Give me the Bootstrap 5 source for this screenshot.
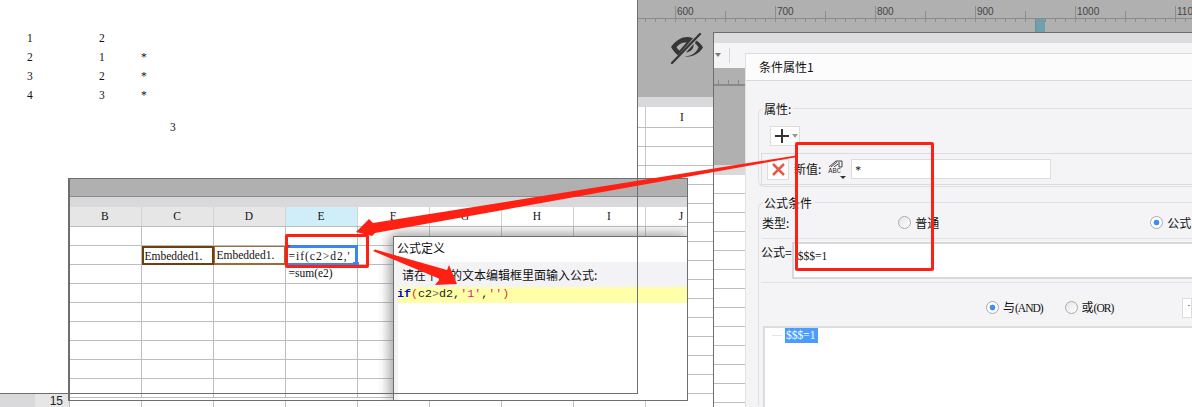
<!DOCTYPE html>
<html lang="zh">
<head>
<meta charset="utf-8">
<title>条件属性</title>
<link href="https://cdn.jsdelivr.net/npm/bootstrap@5.3.0/dist/css/bootstrap.min.css" rel="stylesheet">
<style>
html,body{margin:0;background:#fff;overflow:hidden}
body{font-family:"Liberation Sans","Noto Sans CJK SC",sans-serif;color:#111}
.stage{position:relative;width:1192px;height:407px;overflow:hidden;background:#fff}
.win{position:absolute;overflow:hidden}
.pix{font-family:"Liberation Serif","Noto Sans CJK SC",serif;font-size:11.5px;line-height:1;color:#111;white-space:nowrap}
.cjk{font-family:"Noto Sans CJK SC","Noto Sans CJK JP",sans-serif;font-size:12px;line-height:1;color:#111;white-space:nowrap}
.tight{letter-spacing:-1px}
/* top-left data */
.datablock{left:0;top:0;width:637px;height:393px}
.datarow{display:flex;height:19px;align-items:center;padding-left:27px}
.datablock .rows{padding-top:29px}
.datarow span:nth-child(1){width:72px}
.datarow span:nth-child(2){width:42px}
.datasum{padding:17px 0 0 170px}
/* behind sheet right */
.backsheet{left:638px;top:0;width:75px;height:407px;background:#fff}
.rulerback{height:18px}
.graybar{background:#b0b0b0}
.lightbar{background:#d9d9db;height:10px}
.ruler-wrap{left:637px;top:0;width:555px;height:33px;background:#b0b0b0}
.ruler-line{border-bottom:1px solid #8a8a8a;height:19px}
.teal{left:1035px;top:19px;width:10px;height:14px;background:#6fa0ae;border-left:1px solid #6f8f98}
.eyezone{height:79px;display:flex;justify-content:flex-start;padding:14px 0 0 32px}
.gridrows{height:280px;background-image:linear-gradient(#bdbdbd 1px,transparent 1px),linear-gradient(90deg,#c8c8c8 1px,transparent 1px);background-size:100% 19px,100% 100%;background-position:0 0,7px 0;background-repeat:repeat,no-repeat}
.colhead{height:20px;text-align:center;padding-left:13px;padding-top:5px;background:linear-gradient(90deg,transparent 7px,#c8c8c8 7px,#c8c8c8 8px,transparent 8px)}
/* under-window bits */
.underbar{left:0;top:394px;width:69px;height:13px;display:flex}
.underbar i{display:block;width:35px;background:#d9d9db}
.underbar b{display:block;flex:1;background:#e6e6e6;font-weight:400;font-size:12px;line-height:14px;text-align:right;padding-right:6px;color:#222;font-family:"Liberation Sans",sans-serif}
.underlines{left:69px;top:400px;width:576px;height:7px;background-image:linear-gradient(90deg,#bdbdbd 1px,transparent 1px);background-size:72px 100%;background-position:0 0}
/* spreadsheet */
.sheetwin{left:68px;top:178px;width:620px;height:223px;background:#fff;border:2px solid #6e6e6e;border-width:1px 1px 1px 2px}
.sheetwin .titleb{height:18px;background:#b0b0b0;border-bottom:1px solid #8a8a8a}
.sheetwin .bandb{height:10px;background:#d9d9db}
.xtable{border-collapse:collapse;table-layout:fixed;width:624px;margin:0 0 0 -1px}
.xtable th,.xtable td{width:72px;padding:0;border-right:1px solid #bdbdbd;border-bottom:1px solid #bdbdbd;height:19px;font-weight:400;vertical-align:middle}
.xtable th{background:#e6e6e6;text-align:center;height:19px;border-right-color:#d4d4d4}
.xtable th.sel{background:#cfeefa}
.xtable th.open{background:#fff}
.xtable td{position:relative;padding-left:3px}
.embed{display:block;position:absolute;left:0;top:0;right:-1px;bottom:-1px;border:2px solid #6d3f13;padding:3px 0 0 1px;overflow:hidden}
.embed.lite{border:1px solid #9a6a3a;border-width:1px 2px 2px 1px;padding-left:2px}
.activecell{position:absolute;left:1px;top:-1px;right:-1px;bottom:-1px;border:solid #3a86f0;border-width:3px 3px 2px 0;padding:3px 0 0 2px;overflow:hidden;letter-spacing:1px}
.hnd{position:absolute;left:353px;top:262px;width:6px;height:4px;background:#3a86f0}
.corner{position:absolute;left:286px;top:245px;width:0;height:0;border-top:5px solid #e0201a;border-right:5px solid transparent}
/* formula definition */
.fdlg{left:393px;top:236px;width:295px;height:165px;background:#fff;border:1px solid #6e6e6e;box-shadow:-6px 0 9px rgba(120,120,120,.45),0 -6px 8px rgba(130,130,130,.35);clip-path:inset(-12px 0 0 -14px);overflow:visible}
.fdlg-title{height:25px;padding:5px 0 0 3px;font-size:12px}
.fdlg-hint{height:25px;padding:7px 0 0 8px;background:#f3f3f6;font-size:12px}
.fdlg-code{margin-left:3px;height:16px;background:#ffffa8;font-family:"Liberation Mono",monospace;font-size:11.7px;line-height:15px;color:#222;white-space:pre}
.fdlg-rest{position:absolute;left:0;top:50px;bottom:0;width:4px;background:#f3f3f6}
.k{color:#0000ff;font-weight:700}.p{color:#e8302a}.s{color:#e6198c}.g{color:#777}
/* window 3 */
.propwin{left:713px;top:32px;width:480px;height:376px;background:#fff;border-left:1px solid #6e6e6e;border-top:1px solid #6e6e6e}
.band-a{height:10px;background:#dcdcde}
.band-b{height:25px;background:#f5f5f7;display:flex;align-items:center;gap:7px;padding-left:1px;border-bottom:1px solid #f5f5f7}
.band-b i{display:block;width:0;height:0;border:3px solid transparent;border-top:4px solid #777;border-bottom:0}
.band-b u{display:block;width:1px;height:15px;background:#d8d8d8;margin-left:1px}
.band-c{height:97px;background:#b0b0b0}
.tick-strip{height:18px;border-bottom:2px solid #8a8a8a;background-image:linear-gradient(90deg,#8a8a8a 1px,transparent 1px);background-size:10px 4px;background-position:4px 12px;background-repeat:repeat-x}
.band-d{height:10px;background:#d9d9db}
.band-e{height:230px;background-image:linear-gradient(#bdbdbd 1px,transparent 1px);background-size:100% 19px;background-position:0 18px}
/* condition dialog */
.cdlg{left:745px;top:53px;width:447px;height:354px;background:#f4f4f6;border-left:1px solid #e2e2e4;border-top:1px solid #dcdcdc}
.cdlg-title{height:27px;background:#fcfcfc;border-bottom:1px solid #d8d8da;padding:7px 0 0 13px;font-size:12px}
.fs{position:relative;margin-left:12px;border:1px solid #e0e0e2;border-right:0;border-radius:6px 0 0 6px}
.fs-label{position:absolute;left:4px;top:-7px;background:#f4f4f6;padding:0 2px 0 1px;font-size:12px;line-height:13px}
.fs1{margin-top:27px;height:79px}
.plusbtn{margin:17px 0 0 11px;width:30px;height:20px;background:#fff;border:1px solid #dcdcdc;display:flex;align-items:center;padding-left:3px;gap:2px}
.plusbtn i{display:block;border:3px solid transparent;border-top:4px solid #999;border-bottom:0}
.valrow{margin:7px 0 0 2px;height:32px;border:1px solid #dcdcdc;border-right:0;display:flex;align-items:center;padding-left:5px}
.xbtn{width:22px;height:21px;background:#fff;border:1px solid #dcdcdc;display:flex;align-items:center;justify-content:center}
.newval{margin-left:5px}
.abc{width:20px;height:20px;margin-left:7px;position:relative}
.abc small{position:absolute;left:0;top:8px;font:7px/8px "Liberation Mono",monospace;color:#333}
.abc i{position:absolute;right:2px;bottom:0;border:3px solid transparent;border-top:3px solid #333;border-bottom:0}
.tinput{margin-left:3px;width:200px;height:20px;background:#fff;border:1px solid #dcdcdc;padding:5px 0 0 3px}
.fs2{margin-top:15px;height:204px;border-bottom:0;border-radius:6px 0 0 0}
.typerow{height:36px;margin-left:3px;border-bottom:1px solid #e2e2e4;display:flex;align-items:center;padding-top:4px}
.rd{display:inline-block;flex:none;width:13px;height:13px;border-radius:50%;border:1px solid #aaa;background:linear-gradient(135deg,#e4e4e4,#fff)}
.rd.on{background:radial-gradient(circle,#3f8ef5 0 2.6px,#fff 3.2px)}
.rd-plain{margin-left:109px}
.rd-formula{margin-left:211px}
.rd-and{margin-left:227px}
.rd-or{margin-left:22px}
.fxrow{height:44px;margin-left:2px;border-bottom:1px solid #e2e2e4;display:flex;padding-top:3px}
.fxbox{flex:1;margin:0 0 3px 0;background:#fff;border:solid #d8d8da;border-width:2px 0 2px 2px;padding:7px 0 0 4px}
.logicrow{height:43px;display:flex;align-items:center;padding-top:6px}
.ddsmall{margin-left:69px;width:20px;height:20px;background:#fff;border:1px solid #dcdcdc;padding-left:4px;line-height:14px;font-size:10px}
.treebox{margin-left:4px;height:90px;background:#fff;border:2px solid #dcdcdc;border-right:0;border-bottom:0;display:flex}
.treedash{width:10px;height:1px;background:#e4e4e4;margin:7px 0 0 7px}
.treesel{margin-left:3px;height:15px;width:33px;background:#4a9cff;color:#fff;padding:2px 0 0 1px}
/* overlays */
.frame1{left:0;top:0;width:638px;height:394px;border-right:1px solid #6e6e6e;border-bottom:1px solid #6e6e6e;pointer-events:none}
.redbox{position:absolute;border:3px solid #ff2014;border-radius:2px}
.rb1{left:285px;top:234px;width:84px;height:34px}
.rb2{left:795px;top:142px;width:139px;height:129px}
.arrows{position:absolute;left:0;top:0}
</style>
</head>
<body>
<div class="stage">

  <div class="win datablock">
    <div class="rows">
      <div class="datarow pix"><span>1</span><span>2</span><span></span></div>
      <div class="datarow pix"><span>2</span><span>1</span><span>*</span></div>
      <div class="datarow pix"><span>3</span><span>2</span><span>*</span></div>
      <div class="datarow pix"><span>4</span><span>3</span><span>*</span></div>
    </div>
    <div class="datasum pix">3</div>
  </div>

  <div class="win backsheet">
    <div class="rulerback graybar"></div>
    <div class="eyezone graybar">
      <svg width="34" height="32" viewBox="0 0 34 32">
        <path d="M1 15 C6 8 12 5 17 5 C19 5 21 5.500 23 6.300 L8 23.500 C5.500 21.500 3 18.500 1 15 Z M6.500 15 C7.500 17 8.500 18 9.500 18.500 L16.500 10.500 C12.500 10 9 12 6.500 15 Z" fill="#363636" fill-rule="evenodd"/>
        <path d="M26 8.500 C29 10 31.500 12.500 33 15.500 C29 21.500 23 25.500 14 24.500 C21.500 24 26 21 28.500 15.500 C27.800 14 27 13 25 11.500 Z M23.500 12 C24 16.500 21 20 16 20.500 Z" fill="#363636"/>
        <path d="M2 31 L30 2" stroke="#363636" stroke-width="2.300" stroke-linecap="round"/>
      </svg>
    </div>
    <div class="lightbar"></div>
    <div class="colhead pix">I</div>
    <div class="gridrows"></div>
  </div>

  <div class="win ruler-wrap">
    <div class="ruler-line">
      <svg width="555" height="18" viewBox="637 0 555 18">
        <g stroke="#8c8c8c" stroke-width="1" shape-rendering="crispEdges">
          <path d="M645.500 14V18M655.500 14V18M665.500 14V18M675.500 2V18M685.500 14V18M695.500 14V18M705.500 14V18M715.500 14V18M725.500 7V18M735.500 14V18M745.500 14V18M755.500 14V18M765.500 14V18M775.500 2V18M785.500 14V18M795.500 14V18M805.500 14V18M815.500 14V18M825.500 7V18M835.500 14V18M845.500 14V18M855.500 14V18M865.500 14V18M875.500 2V18M885.500 14V18M895.500 14V18M905.500 14V18M915.500 14V18M925.500 7V18M935.500 14V18M945.500 14V18M955.500 14V18M965.500 14V18M975.500 2V18M985.500 14V18M995.500 14V18M1005.500 14V18M1015.500 14V18M1025.500 7V18M1035.500 14V18M1045.500 14V18M1055.500 14V18M1065.500 14V18M1075.500 2V18M1085.500 14V18M1095.500 14V18M1105.500 14V18M1115.500 14V18M1125.500 7V18M1135.500 14V18M1145.500 14V18M1155.500 14V18M1165.500 14V18M1175.500 2V18M1185.500 14V18"/>
        </g>
        <g font-family="Liberation Sans, sans-serif" font-size="10" fill="#444">
          <text x="677" y="11">600</text><text x="777" y="11">700</text><text x="877" y="11">800</text><text x="977" y="11">900</text><text x="1077" y="11">1000</text><text x="1177" y="11">110</text>
        </g>
      </svg>
    </div>
  </div>
  <div class="win teal"></div>

  <div class="win propwin">
    <div class="band-a"></div>
    <div class="band-b"><i></i><u></u></div>
    <div class="band-c"><div class="tick-strip"></div></div>
    <div class="band-d"></div>
    <div class="band-e"></div>
  </div>

  <div class="win cdlg">
    <div class="cdlg-title cjk">条件属性1</div>
    <div class="fs fs1">
      <span class="fs-label cjk">属性:</span>
      <div class="plusbtn">
        <svg width="16" height="16" viewBox="0 0 16 16"><path d="M8 1V15M1 8H15" stroke="#333" stroke-width="2"/></svg><i></i>
      </div>
      <div class="valrow">
        <div class="xbtn"><svg width="15" height="15" viewBox="0 0 15 15"><path d="M2 2L13 13M13 2L2 13" stroke="#e8574a" stroke-width="2.500"/></svg></div>
        <span class="cjk newval">新值:</span>
        <div class="abc">
          <svg class="d-block" width="16" height="9" viewBox="0 0 16 9"><path d="M1 8L8 2H14V8H11V3M3 8L9 3M6 8L10 5" fill="none" stroke="#444" stroke-width="1"/></svg>
          <small>ABC</small><i></i>
        </div>
        <div class="tinput pix">*</div>
      </div>
    </div>
    <div class="fs fs2">
      <span class="fs-label cjk">公式条件</span>
      <div class="typerow">
        <span class="cjk">类型:</span>
        <span class="rd rd-plain"></span><span class="cjk ms-1">普通</span>
        <span class="rd on rd-formula"></span><span class="cjk ms-1">公式</span>
      </div>
      <div class="fxrow">
        <span class="cjk pt-1">公式=</span>
        <div class="fxbox pix">$$$=1</div>
      </div>
      <div class="logicrow">
        <span class="rd on rd-and"></span><span class="cjk ms-1">与<span class="pix tight">(AND)</span></span>
        <span class="rd rd-or"></span><span class="cjk ms-1">或<span class="pix tight">(OR)</span></span>
        <span class="ddsmall">·</span>
      </div>
      <div class="treebox">
        <span class="treedash"></span>
        <span class="treesel pix text-white">$$$=1</span>
      </div>
    </div>
  </div>

  <div class="win underbar"><i></i><b>15</b></div>
  <div class="win underlines"></div>

  <div class="win sheetwin">
    <div class="titleb"></div>
    <div class="bandb"></div>
    <table class="xtable pix">
      <thead><tr><th>B</th><th>C</th><th>D</th><th class="sel">E</th><th class="open">F</th><th class="open">G</th><th class="open">H</th><th class="open">I</th><th class="open">J</th></tr></thead>
      <tbody>
        <tr><td></td><td></td><td></td><td></td><td></td><td></td><td></td><td></td><td></td></tr>
        <tr><td></td><td><span class="embed">Embedded1.</span></td><td><span class="embed lite">Embedded1.</span></td><td><span class="activecell">=if(c2&gt;d2,'</span></td><td></td><td></td><td></td><td></td><td></td></tr>
        <tr><td></td><td></td><td></td><td>=sum(e2)</td><td></td><td></td><td></td><td></td><td></td></tr>
        <tr><td></td><td></td><td></td><td></td><td></td><td></td><td></td><td></td><td></td></tr>
        <tr><td></td><td></td><td></td><td></td><td></td><td></td><td></td><td></td><td></td></tr>
        <tr><td></td><td></td><td></td><td></td><td></td><td></td><td></td><td></td><td></td></tr>
        <tr><td></td><td></td><td></td><td></td><td></td><td></td><td></td><td></td><td></td></tr>
        <tr><td></td><td></td><td></td><td></td><td></td><td></td><td></td><td></td><td></td></tr>
        <tr><td></td><td></td><td></td><td></td><td></td><td></td><td></td><td></td><td></td></tr>
      </tbody>
    </table>
  </div>
  <span class="hnd"></span><span class="corner"></span>

  <div class="win fdlg">
    <div class="fdlg-title cjk">公式定义</div>
    <div class="fdlg-hint cjk">请在下面的文本编辑框里面输入公式:</div>
    <div class="fdlg-code"><span class="k">if</span><span class="p">(</span>c2<span class="g">&gt;</span>d2,<span class="s">'1'</span>,<span class="s">''</span><span class="p">)</span></div>
    <div class="fdlg-rest"></div>
  </div>

  <div class="win frame1"></div>

  <div class="redbox rb1"></div>
  <div class="redbox rb2"></div>
  <svg class="arrows" width="1192" height="407" viewBox="0 0 1192 407">
    <polygon fill="#ff2014" points="796,155.500 797,157 375,233 372,236 356,232 369,219 373,223"/>
    <polygon fill="#ff2014" points="375,249.500 447,270 449,265 457,284 435,285 440,279 373,251"/>
  </svg>
</div>
</body>
</html>
